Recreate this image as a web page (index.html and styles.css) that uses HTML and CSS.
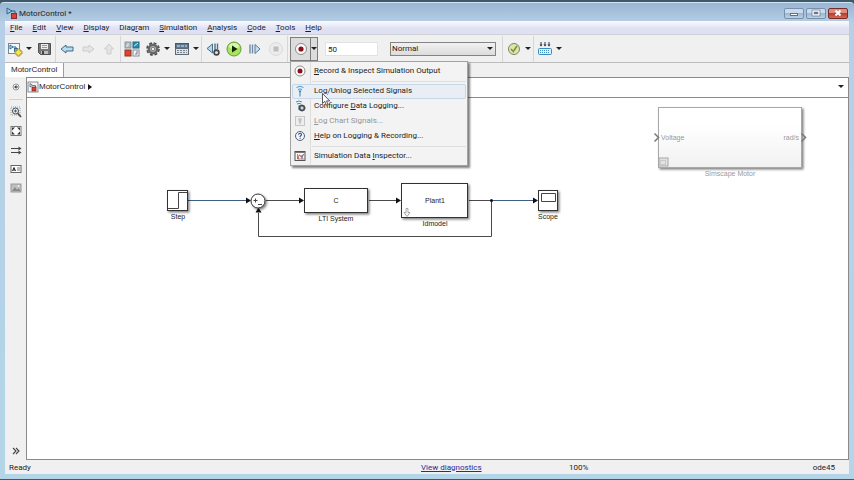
FILE: index.html
```html
<!DOCTYPE html>
<html lang="en">
<head>
<meta charset="utf-8">
<title>MotorControl *</title>
<link rel="stylesheet" href="styles.css">
</head>
<body>
  <div class="window">
    <header class="titlebar">
      <svg class="logo" width="11" height="12" viewBox="0 0 11 12">
        <path d="M1 1v6l5-3z" fill="#9cc4e4" stroke="#2f6690"/>
        <path d="M5 4h4v3" fill="none" stroke="#2f5577"/>
        <rect x="5.500" y="6.500" width="5" height="5" fill="#d9413a" stroke="#8d2a26"/>
      </svg>
      <span class="title">MotorControl *</span>
      <div class="window-buttons">
        <button class="win-btn" aria-label="Minimize"><svg width="10" height="8" viewBox="0 0 10 8"><rect x="1.500" y="4.500" width="7" height="2" fill="#fff" stroke="#5d7189"/></svg></button>
        <button class="win-btn" aria-label="Maximize"><svg width="10" height="8" viewBox="0 0 10 8"><rect x="2" y="2" width="6" height="4" fill="#657a91" stroke="#fff" stroke-width="1.500"/><rect x="1" y="1" width="8" height="6" fill="none" stroke="#5d7189" stroke-width=".6"/></svg></button>
        <button class="win-btn close" aria-label="Close"><svg width="10" height="8" viewBox="0 0 10 8"><path d="M2.500 1.500l5 5M7.500 1.500l-5 5" stroke="#fff" stroke-width="2"/></svg></button>
      </div>
    </header>

    <nav class="menubar">
      <button><u>F</u>ile</button>
      <button><u>E</u>dit</button>
      <button><u>V</u>iew</button>
      <button><u>D</u>isplay</button>
      <button>Diag<u>r</u>am</button>
      <button><u>S</u>imulation</button>
      <button><u>A</u>nalysis</button>
      <button><u>C</u>ode</button>
      <button><u>T</u>ools</button>
      <button><u>H</u>elp</button>
    </nav>

    <div class="toolbar">
      <div class="split">
        <button class="tool" aria-label="New model"><svg width="16" height="16" viewBox="0 0 16 16">
          <rect x="1.500" y="2.500" width="11" height="10" fill="#f5f9fc" stroke="#72889b"/>
          <path d="M3 4v4l3-2zM6 6h3v3" fill="none" stroke="#23679c"/><rect x="7.500" y="7.500" width="3" height="3" fill="#7ab1d4" stroke="#316a92"/>
          <path d="M10 8h3v2h2v3h-2v2h-3v-2H8v-3h2z" fill="#f8e64b" stroke="#9d8713" stroke-width=".8"/>
        </svg></button>
        <button class="caret" aria-label="New options"></button>
      </div>
      <button class="tool" aria-label="Save"><svg width="16" height="16" viewBox="0 0 16 16">
        <path d="M2.500 2.500h12v11h-10l-2-2z" fill="#777" stroke="#505050"/><path d="M5 3h7v5H5z" fill="#ececec"/><path d="M6 4.500h5M6 6.500h5" stroke="#999"/><path d="M5 10h7v3H5z" fill="#bdbdbd"/><path d="M6 10h2v3H6z" fill="#444"/>
      </svg></button>
      <i class="sep"></i>
      <button class="tool" aria-label="Back"><svg width="16" height="16" viewBox="0 0 16 16"><path d="M2 8l5-4v2h7v4H7v2z" fill="#b7dcf2" stroke="#406b8d"/></svg></button>
      <button class="tool" aria-label="Forward" disabled><svg width="16" height="16" viewBox="0 0 16 16"><path d="M14 8L9 4v2H3v4h6v2z" fill="#e4e4e4" stroke="#cdcdcd"/></svg></button>
      <button class="tool" aria-label="Up" disabled><svg width="16" height="16" viewBox="0 0 16 16"><path d="M8 3L3.500 8H6v5h4V8h2.500z" fill="#e4e4e4" stroke="#cdcdcd"/></svg></button>
      <i class="sep"></i>
      <button class="tool" aria-label="Library browser"><svg width="16" height="16" viewBox="0 0 16 16">
        <rect x="1" y="1" width="6" height="6" fill="#a9b4bd" stroke="#8d979e"/><rect x="9" y="1" width="6" height="6" fill="#2b8dab" stroke="#1d6b87"/><rect x="1" y="9" width="6" height="6" fill="#d94730" stroke="#95301f"/><rect x="9" y="9" width="6" height="6" fill="#f4f6f8" stroke="#808e98"/>
        <path d="M2 5h2V2M10 5l4-3" fill="none" stroke="#fff" stroke-width=".8"/><path d="M11 13h2v-3" fill="none" stroke="#777"/>
      </svg></button>
      <div class="split">
        <button class="tool" aria-label="Model configuration"><svg width="16" height="16" viewBox="0 0 16 16">
          <circle cx="8" cy="8" r="6" fill="none" stroke="#4d4d4d" stroke-width="1.600" stroke-dasharray="2.900 1.812"/><circle cx="8" cy="8" r="4.200" fill="#b8b8b8" stroke="#666" stroke-width="2.400"/><circle cx="8" cy="8" r="1.800" fill="#f0f0f0" stroke="#777"/>
        </svg></button>
        <button class="caret" aria-label="Configuration options"></button>
      </div>
      <div class="split">
        <button class="tool" aria-label="Model explorer"><svg width="16" height="16" viewBox="0 0 16 16">
          <rect x="1.500" y="2.500" width="13" height="5" fill="#5c7891" stroke="#46586a"/><path d="M3 5h10" stroke="#dbe6ee" stroke-dasharray="3 1"/><rect x="1.500" y="7.500" width="13" height="6" fill="#dde2e6" stroke="#5d6a75"/><path d="M3 9.500h10M3 11.500h10" stroke="#7b8791" stroke-dasharray="2 1"/>
        </svg></button>
        <button class="caret" aria-label="Explorer options"></button>
      </div>
      <i class="sep"></i>
      <button class="tool" aria-label="Step back"><svg width="16" height="16" viewBox="0 0 16 16">
        <path d="M7.500 3v9L2 7.500z" fill="#b6d5e9" stroke="#47718f"/><path d="M10 2.500v7M12.500 2.500v6" stroke="#47718f" stroke-width="1.400"/><circle cx="11.500" cy="11.500" r="2.400" fill="#ddd" stroke="#444" stroke-width="1.600"/>
      </svg></button>
      <button class="tool" aria-label="Run"><svg width="16" height="16" viewBox="0 0 16 16"><circle cx="8" cy="8" r="7" fill="#a8e45e" stroke="#639a31"/><ellipse cx="8" cy="5" rx="5" ry="3" fill="#d8f6ae"/><path d="M6 4.500v7L11.500 8z" fill="#15250b"/></svg></button>
      <button class="tool" aria-label="Step forward"><svg width="16" height="16" viewBox="0 0 16 16"><path d="M3 3.500v9M5.500 3.500v9" stroke="#6d8ba4" stroke-width="1.400"/><path d="M8 3.500v9L13 8z" fill="#c7e0f0" stroke="#55799a"/></svg></button>
      <button class="tool" aria-label="Stop" disabled><svg width="16" height="16" viewBox="0 0 16 16"><circle cx="8" cy="8" r="6.500" fill="#ececec" stroke="#d9d9d9"/><rect x="5.500" y="5.500" width="5" height="5" fill="#bdbdbd"/></svg></button>
      <i class="sep"></i>

      <div class="record">
        <button class="record-btn" aria-label="Record"><svg width="16" height="16" viewBox="0 0 16 16"><circle cx="8" cy="8" r="5.500" fill="#fafafa" stroke="#8c8c8c"/><circle cx="8" cy="8" r="2.600" fill="#8c0f1c"/></svg></button>
        <button class="record-caret caret" aria-label="Record options"></button>
        <div class="menu" role="menu">
          <button class="item" role="menuitem">
            <svg width="14" height="14" viewBox="0 0 14 14"><circle cx="7" cy="7" r="5" fill="#fff" stroke="#8c8c8c"/><circle cx="7" cy="7" r="2.500" fill="#8c0f1c"/></svg>
            <span><u>R</u>ecord &amp; Inspect Simulation Output</span>
          </button>
          <hr>
          <button class="item active" role="menuitem">
            <svg width="14" height="14" viewBox="0 0 14 14"><path d="M3.500 3.500q3.500-2.500 7 0M5 5.500q2-1.200 4 0" fill="none" stroke="#4b9bcb"/><path d="M5.500 6.500h3l-1 2v4h-1v-4z" fill="#2c83b9"/></svg>
            <span>Lo<u>g</u>/Unlog Selected Signals</span>
          </button>
          <button class="item" role="menuitem">
            <svg width="14" height="14" viewBox="0 0 14 14"><path d="M3 3q3-2 6 0M4 5q2-1.200 4 0M6 6v5" fill="none" stroke="#3f8fbf"/><circle cx="9" cy="9" r="2.500" fill="#d5d5d5" stroke="#424b52" stroke-width="1.600"/><path d="M9 5.500v2M9 10.500v2M5.500 9h2M10.500 9h2" stroke="#424b52" stroke-width=".8"/></svg>
            <span>Configure <u>D</u>ata Logging...</span>
          </button>
          <button class="item" role="menuitem" disabled>
            <svg width="14" height="14" viewBox="0 0 14 14"><rect x="2.500" y="2.500" width="9" height="9" fill="#eee" stroke="#c6c6c6"/><path d="M5 5h4M7 5v5M5.500 7h3" stroke="#b5b5b5" stroke-width="1.200"/></svg>
            <span><u>L</u>og Chart Signals...</span>
          </button>
          <button class="item" role="menuitem">
            <svg width="14" height="14" viewBox="0 0 14 14"><circle cx="7" cy="7" r="4.500" fill="#f2f6f9" stroke="#55626e"/><path d="M5.500 5.800q.2-1.500 1.600-1.500t1.500 1.300q0 .8-1.500 1.700v.7M7.100 8.800v1" fill="none" stroke="#27508a" stroke-width="1.100"/></svg>
            <span><u>H</u>elp on Logging &amp; Recording...</span>
          </button>
          <hr>
          <button class="item" role="menuitem">
            <svg width="14" height="14" viewBox="0 0 14 14"><rect x="2" y="2.500" width="10" height="9" fill="#f7f7f7" stroke="#555"/><path d="M2 3.500h10" stroke="#777"/><path d="M4.500 5v5h7" fill="none" stroke="#777" stroke-width=".8"/><path d="M5 10q1-6 2.500-3t3-2" fill="none" stroke="#c0463c"/><path d="M9 6v4" stroke="#4070a0"/></svg>
            <span>Simulation Data <u>I</u>nspector...</span>
          </button>
        </div>
        <svg class="cursor" width="9" height="13" viewBox="0 0 9 13"><path d="M.5.500v10l2.300-2.200 1.600 4 1.700-.7-1.600-3.700h3.200z" fill="#fff" stroke="#333" stroke-width=".8"/></svg>
      </div>

      <input class="stop-time" type="text" value="50" aria-label="Stop time">
      <div class="mode caret">
        <select aria-label="Simulation mode"><option>Normal</option></select>
      </div>
      <i class="sep"></i>
      <div class="split">
        <button class="tool" aria-label="Model advisor"><svg width="16" height="16" viewBox="0 0 16 16"><circle cx="8" cy="8" r="5.500" fill="#dce5ae" stroke="#7d8560"/><path d="M5 8l2.300 2.500L11 5" fill="none" stroke="#7d9435" stroke-width="1.600"/></svg></button>
        <button class="caret" aria-label="Advisor options"></button>
      </div>
      <i class="sep"></i>
      <div class="split">
        <button class="tool" aria-label="Build"><svg width="16" height="16" viewBox="0 0 16 16"><path d="M4 1v4M8 1v4M12 1v4" stroke="#2d3b48"/><path d="M2.500 3.500h3L4 5.500zM6.500 3.500h3L8 5.500zM10.500 3.500h3L12 5.500z" fill="#2d3b48"/><rect x="1.500" y="7.500" width="13" height="6" rx="1" fill="#e1f0fa" stroke="#3c8abf"/><path d="M3 9.500h10M3 11.500h10" stroke="#3c8abf" stroke-dasharray="1 1"/></svg></button>
        <button class="caret" aria-label="Build options"></button>
      </div>
    </div>

    <div class="tabs">
      <button class="tab">MotorControl</button>
    </div>

    <main class="workspace">
      <aside class="palette">
        <button aria-label="Hide browser"><svg width="14" height="14" viewBox="0 0 14 14"><circle cx="7" cy="7" r="3" fill="#f5f5f5" stroke="#999"/><path d="M5 7l2.500-2v4zM7 6.500h2v1H7z" fill="#444"/></svg></button>
        <hr>
        <button aria-label="Zoom"><svg width="14" height="14" viewBox="0 0 14 14"><rect x="2" y="2" width="9" height="8" fill="none" stroke="#999" stroke-dasharray="1 1"/><circle cx="6.500" cy="6" r="3" fill="#eef4f8" stroke="#444"/><path d="M5 6h3M6.500 4.500v3" stroke="#2d6390"/><path d="M8.700 8.200L12 12" stroke="#444" stroke-width="1.600"/></svg></button>
        <button aria-label="Fit to view"><svg width="14" height="14" viewBox="0 0 14 14"><rect x="2" y="2.500" width="10" height="9" fill="#fff" stroke="#777"/><path d="M3 3.500h3l-3 3zM11 3.500v3l-3-3zM3 10.500v-3l3 3zM11 10.500H8l3-3z" fill="#333"/></svg></button>
        <button aria-label="Sample time"><svg width="14" height="14" viewBox="0 0 14 14"><path d="M2 5.500h8M2 9.500h8" stroke="#444"/><path d="M9.500 3.500v4l3-2zM9.500 7.500v4l3-2z" fill="#444"/></svg></button>
        <button aria-label="Annotation"><svg width="14" height="14" viewBox="0 0 14 14"><rect x="2" y="3.500" width="10" height="7" fill="#fff" stroke="#666"/><path d="M3.500 9L5 5.500 6.500 9M4 8h2" fill="none" stroke="#222"/><path d="M8 6h3M8 8h3" stroke="#777"/></svg></button>
        <button aria-label="Image"><svg width="14" height="14" viewBox="0 0 14 14"><rect x="2" y="3" width="10" height="8" fill="#bfbfbf" stroke="#999"/><path d="M3 10l3-4 2 3 1.500-2 2 3z" fill="#888"/><circle cx="9.500" cy="5" r="1" fill="#eee"/></svg></button>
        <button class="more" aria-label="More"><svg width="14" height="14" viewBox="0 0 14 14"><path d="M4 4l3 3-3 3M7 4l3 3-3 3" fill="none" stroke="#444" stroke-width="1.100"/></svg></button>
      </aside>

      <section class="editor">
        <div class="breadcrumb">
          <svg width="12" height="12" viewBox="0 0 12 12"><rect x="1" y="1" width="10" height="10" fill="#f4f4f4" stroke="#8a8a8a"/><path d="M3 2.500v3.500l2.500-1.700zM5.500 4.500h3V6" fill="none" stroke="#35658d" stroke-width=".8"/><rect x="5" y="6" width="4" height="4" fill="#d9413a" stroke="#7d2420" stroke-width=".7"/></svg>
          <a href="#">MotorControl</a>
          <i class="crumb-arrow"></i>
          <button class="caret history" aria-label="History"></button>
        </div>
        <svg class="canvas">
          <defs>
            <filter id="shadow" x="-10%" y="-20%" width="130%" height="150%"><feDropShadow dx="1.500" dy="1.500" stdDeviation="1" flood-opacity=".5"/></filter>
            <linearGradient id="fade" x1="0" y1="0" x2="0" y2="1"><stop offset=".3" stop-color="#fff"/><stop offset="1" stop-color="#f1f1f1"/></linearGradient>
          </defs>
          <!-- model coordinates start at the window corner -->
          <g transform="translate(-27 -98)">
            <g class="wire">
              <path class="signal" d="M188 200.500h60"/>
              <path d="M266 200.500h34M369 200.500h28M469 200.500h22"/>
              <path class="signal" d="M491 200.500h42"/>
              <path d="M491.500 200v36.500h-233V213"/>
            </g>
            <g class="heads">
              <path d="M246 197.500v6l5-3zM299 197.500v6l5-3zM396 197.500v6l5-3zM533 197.500v6l5-3zM255.500 212.500h6l-3-5z"/>
              <circle cx="491.500" cy="200.500" r="1.500"/>
            </g>
            <g class="block">
              <rect x="167.500" y="190.500" width="20" height="20"/>
              <circle cx="258" cy="201" r="7"/>
              <rect x="304.500" y="188.500" width="63" height="24"/>
              <rect x="401.500" y="183.500" width="66" height="34"/>
              <rect x="538.500" y="190.500" width="19" height="20"/>
            </g>
            <path class="detail" d="M168 208.500h10.500v-16H187M541.500 193.500h14v8h-14z"/>
            <path class="detail" d="M255.500 198.500v4M253.500 200.500h4M258 204.500h4"/>
            <path d="M406 208.500h2v4h2l-3 4-3-4h2z" fill="#f6f6f6" stroke="#999" stroke-width=".8"/>
            <g class="label">
              <text x="336" y="203">C</text>
              <text x="435" y="203">Plant1</text>
              <text x="178" y="219">Step</text>
              <text x="336" y="221">LTI System</text>
              <text x="435" y="226">Idmodel</text>
              <text x="548" y="219">Scope</text>
            </g>
            <g class="commented">
              <rect x="658.500" y="107.500" width="143" height="60" fill="url(#fade)" filter="url(#shadow)"/>
              <path class="port" d="M654.500 133.500l4 4-4 4M801.500 133.500l4 4-4 4"/>
              <rect x="659" y="158" width="9" height="8" fill="#e2e2e2" stroke="none"/><path d="M660.500 160.500h5v4h-5z" stroke-width=".8" opacity=".5"/>
              <text x="661" y="140">Voltage</text>
              <text x="799" y="140" text-anchor="end">rad/s</text>
              <text x="730" y="176" text-anchor="middle">Simscape Motor</text>
            </g>
          </g>
        </svg>
      </section>
    </main>

    <footer class="status">
      <span>Ready</span>
      <a href="#">View diagnostics</a>
      <span>100%</span>
      <span class="solver">ode45</span>
    </footer>
  </div>
</body>
</html>
```
FILE: styles.css
```css
* {
  box-sizing: border-box;
}

body {
  margin: 0;
  height: 100vh;
  padding: 2px 0 1px;
  background: #41586b;
  font-family: Roboto, "Liberation Sans", sans-serif;
  font-size: 8px;
  line-height: 12px;
  color: #1c1c1c;
}

button, input, select {
  font: inherit;
  color: inherit;
  margin: 0;
  padding: 0;
  border: 0;
  background: none;
}

svg {
  display: block;
  flex: none;
}

.window {
  display: flex;
  flex-direction: column;
  height: 100%;
  padding: 0 5px 5px;
  border: solid #cde6f3;
  border-width: 1px 0 0;
  border-radius: 4px 4px 0 0;
  background: linear-gradient(#9ab5d2, #b6cfe6 20px, #b4d5e8);
}

.titlebar {
  display: flex;
  align-items: center;
  height: 18px;
  gap: 2px;
  padding: 2px 1px 0;
}

.title {
  flex: 1;
  padding-top: 1px;
}

.window-buttons {
  display: flex;
  gap: 2px;
}

.win-btn {
  display: flex;
  align-items: center;
  justify-content: center;
  width: 20px;
  height: 11px;
  border: 1px solid #7890aa;
  border-radius: 2px;
  background: linear-gradient(#c9dbec 50%, #9fb8d0 50%, #b9d0e4);
}

.close {
  border-color: #762d2b;
  background: linear-gradient(#dc8d80 50%, #bd3a2c 50%, #d26a55);
}

.menubar {
  display: flex;
  align-items: center;
  gap: 10px;
  height: 14px;
  padding-left: 5px;
  background: linear-gradient(#fbfcff, #dfe0f1 60%);
  border-bottom: 1px solid #cfcfd6;
}

.toolbar {
  display: flex;
  align-items: center;
  gap: 1px;
  height: 28px;
  background: #f0f0f0;
  border-bottom: 1px solid #bdbdbd;
}

.tool {
  display: flex;
  align-items: center;
  justify-content: center;
  width: 20px;
  height: 20px;
}

.split {
  display: flex;
}

.caret {
  display: flex;
  align-items: center;
  justify-content: center;
  width: 8px;
}

.caret::after {
  content: "";
  border: solid transparent;
  border-width: 3px 3px 0;
  border-top-color: #222;
}

.sep {
  width: 1px;
  height: 26px;
  background: #d6d6d6;
}

.record {
  position: relative;
  display: flex;
  width: 28px;
  height: 24px;
  margin: 0 6px 0 1px;
  border: 1px solid #7d7d7d;
  background: #dcdcdc;
}

.record-btn {
  display: flex;
  align-items: center;
  justify-content: center;
  width: 19px;
}

.record-caret {
  width: 7px;
  border-left: 1px solid #7d7d7d;
}

.menu {
  position: absolute;
  z-index: 1;
  top: 23px;
  left: -1px;
  width: 178px;
  padding: 2px 1px 1px;
  border: 1px solid #a2a2a2;
  background: linear-gradient(to right, #f1f1f1 19px, #dedede 19px, #dedede 20px, #f3f3f3 20px);
  box-shadow: 2px 2px 2px rgba(0, 0, 0, 0.5);
}

.menu hr {
  height: 1px;
  margin: 2px 0 2px 20px;
  border: 0;
  background: #dedede;
}

.item {
  display: flex;
  align-items: center;
  gap: 7px;
  width: 100%;
  height: 15px;
  text-align: left;
  white-space: nowrap;
  border: 1px solid transparent;
}

.item.active {
  border-color: #c5d7e8;
  border-radius: 2px;
  background: #e9eef5;
}

.item:disabled {
  color: #959595;
}

.cursor {
  position: absolute;
  z-index: 2;
  top: 55px;
  left: 31px;
}

.stop-time {
  width: 53px;
  height: 14px;
  padding: 1px 2px 0;
  border: 1px solid #e2e2e2;
  background: #fff;
}

.mode {
  width: 106px;
  height: 14px;
  margin: 0 5px 0 11px;
  padding: 0 2px 0 1px;
  border: 1px solid #848484;
  background: linear-gradient(#f1f1f1, #dcdcdc);
}

.mode select {
  flex: 1;
  appearance: none;
}

.tabs {
  display: flex;
  height: 14px;
  background: #f0f0f0;
}

.tab, .breadcrumb {
  font-family: "Liberation Sans", Arial, sans-serif;
}

.tab {
  padding: 0 6px;
  background: #fff;
  border-right: 1px solid #9d9d9d;
}

.workspace {
  display: flex;
  flex: 1;
  min-height: 0;
}

.palette {
  display: flex;
  flex-direction: column;
  align-items: center;
  gap: 5px;
  width: 21px;
  padding: 3px 0 2px;
  background: #f0f0f0;
}

.palette hr {
  width: 14px;
  height: 1px;
  margin: 0;
  border: 0;
  background: #d0d0d0;
}

.more {
  margin-top: auto;
}

.editor {
  display: flex;
  flex-direction: column;
  flex: 1;
  border: 1px solid #8a8a8a;
  background: #fff;
}

.breadcrumb {
  display: flex;
  align-items: center;
  height: 20px;
  padding: 0 3px 2px 0;
  border-bottom: 1px solid #8a8a8a;
}

.breadcrumb a {
  color: inherit;
  text-decoration: none;
}

.crumb-arrow {
  margin-left: 3px;
  border: solid transparent;
  border-width: 3px 0 3px 4px;
  border-left-color: #111;
}

.history {
  margin-left: auto;
}

.canvas {
  flex: 1;
  width: 100%;
  font-family: "Liberation Sans", Arial, sans-serif;
  font-size: 7px;
}

.wire path {
  fill: none;
  stroke: #4a4a4a;
}

.wire .signal {
  stroke: #3e5f85;
}

.heads {
  fill: #111;
}

.block {
  fill: #fff;
  stroke: #333;
  filter: url(#shadow);
}

.detail {
  fill: none;
  stroke: #444;
}

.label {
  fill: #222;
  text-anchor: middle;
}

.commented rect, .commented path {
  stroke: #a8a8a8;
}

.commented path {
  fill: none;
}

.commented .port {
  stroke: #777;
  stroke-width: 1.5px;
}

.commented text {
  fill: #999;
}

.status {
  display: grid;
  grid-template-columns: 412px 148px 1fr auto;
  align-items: center;
  height: 14px;
  padding: 1px 14px 0 4px;
  background: #f0f0f0;
}

.status a {
  color: #2a2a9c;
}
```
